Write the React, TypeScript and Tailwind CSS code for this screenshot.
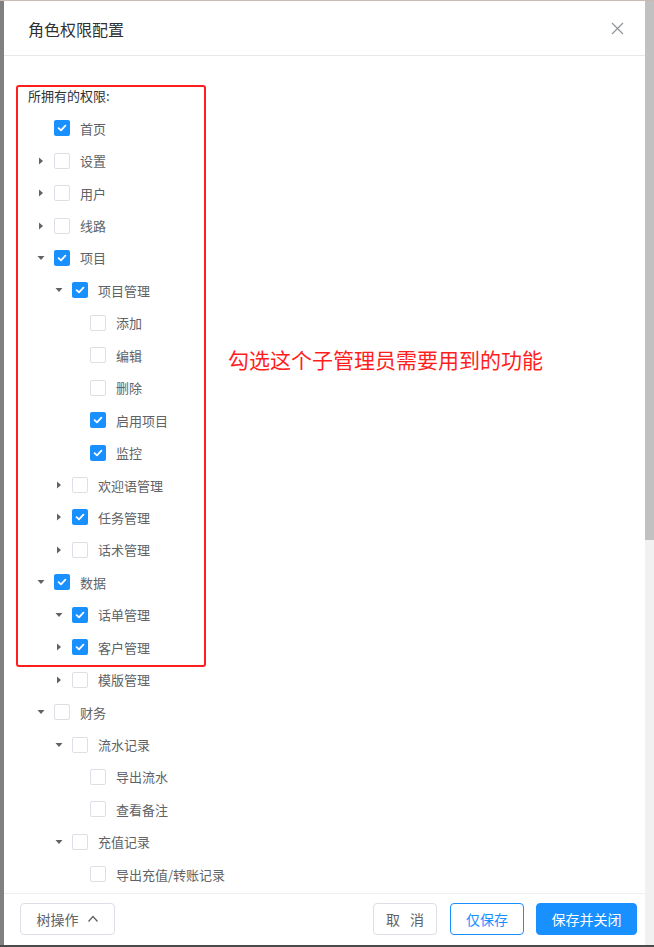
import React from "react";

type Node = { level: number; caret: "none" | "right" | "down"; checked: boolean; label: string };

const rows: Node[] = [
  { level: 0, caret: "none", checked: true, label: "首页" },
  { level: 0, caret: "right", checked: false, label: "设置" },
  { level: 0, caret: "right", checked: false, label: "用户" },
  { level: 0, caret: "right", checked: false, label: "线路" },
  { level: 0, caret: "down", checked: true, label: "项目" },
  { level: 1, caret: "down", checked: true, label: "项目管理" },
  { level: 2, caret: "none", checked: false, label: "添加" },
  { level: 2, caret: "none", checked: false, label: "编辑" },
  { level: 2, caret: "none", checked: false, label: "删除" },
  { level: 2, caret: "none", checked: true, label: "启用项目" },
  { level: 2, caret: "none", checked: true, label: "监控" },
  { level: 1, caret: "right", checked: false, label: "欢迎语管理" },
  { level: 1, caret: "right", checked: true, label: "任务管理" },
  { level: 1, caret: "right", checked: false, label: "话术管理" },
  { level: 0, caret: "down", checked: true, label: "数据" },
  { level: 1, caret: "down", checked: true, label: "话单管理" },
  { level: 1, caret: "right", checked: true, label: "客户管理" },
  { level: 1, caret: "right", checked: false, label: "模版管理" },
  { level: 0, caret: "down", checked: false, label: "财务" },
  { level: 1, caret: "down", checked: false, label: "流水记录" },
  { level: 2, caret: "none", checked: false, label: "导出流水" },
  { level: 2, caret: "none", checked: false, label: "查看备注" },
  { level: 1, caret: "down", checked: false, label: "充值记录" },
  { level: 2, caret: "none", checked: false, label: "导出充值/转账记录" },
];

function Caret({ kind }: { kind: Node["caret"] }) {
  if (kind === "none") return <span className="w-[18px] shrink-0" />;
  return (
    <span className="w-[18px] shrink-0 flex items-center justify-center">
      <svg width="10" height="10" viewBox="0 0 10 10">
        {kind === "right" ? (
          <polygon points="3,1.5 7,5 3,8.5" fill="#606266" />
        ) : (
          <polygon points="1.5,3 8.5,3 5,7" fill="#606266" />
        )}
      </svg>
    </span>
  );
}

function Checkbox({ checked }: { checked: boolean }) {
  return checked ? (
    <span className="w-4 h-4 shrink-0 rounded-[2px] bg-[#1890ff] flex items-center justify-center">
      <svg width="12" height="12" viewBox="0 0 12 12">
        <path d="M2.6 6.2 L5 8.4 L9.4 3.6" fill="none" stroke="#fff" strokeWidth="1.8" strokeLinecap="round" strokeLinejoin="round" />
      </svg>
    </span>
  ) : (
    <span className="w-4 h-4 shrink-0 rounded-[2px] border border-[#dcdfe6] bg-white" />
  );
}

function Row({ n }: { n: Node }) {
  const pad = n.level === 0 ? "pl-[28px]" : n.level === 1 ? "pl-[46px]" : "pl-[64px]";
  return (
    <div className={`h-[32.45px] flex items-center ${pad}`}>
      <Caret kind={n.caret} />
      <span className="w-[4px] shrink-0" />
      <Checkbox checked={n.checked} />
      <span className="ml-[10px] text-[13px] text-[#606266] whitespace-nowrap leading-none">{n.label}</span>
    </div>
  );
}

export default function App() {
  return (
    <div
      className="w-[654px] h-[947px] flex flex-col bg-white overflow-hidden relative"
      style={{ fontFamily: '"Noto Sans CJK SC", "Noto Sans", sans-serif' }}
    >
      <div className="h-px bg-[#c9bab6] shrink-0" />
      <div className="flex-1 flex min-h-0">
        <div className="w-[4px] bg-[#808080] shrink-0" />
        <div className="flex-1 flex flex-col min-w-0 relative">
          {/* header */}
          <div className="h-[55px] shrink-0 border-b border-[#e8e8e8] flex items-center justify-between pl-[24px] pr-[21px]">
            <span className="text-[16px] text-[#303133] leading-none mt-[1px]">角色权限配置</span>
            <svg width="13" height="13" viewBox="0 0 13 13">
              <path d="M1 1 L12 12 M12 1 L1 12" stroke="#909399" strokeWidth="1.2" />
            </svg>
          </div>
          {/* body */}
          <div className="flex-1 min-h-0 overflow-hidden pt-[30px] relative">
            <div className="pl-[24px] h-[20px] flex items-center text-[13px] text-[#303133]">所拥有的权限:</div>
            <div className="mt-[6px]">
              {rows.map((n, i) => (
                <Row key={i} n={n} />
              ))}
            </div>
            <div className="absolute left-[12px] top-[29px] w-[190px] h-[582px] border-[2.5px] border-[#ff1e1e] rounded-[3px]" />
            <div className="absolute left-[224px] top-[293px] text-[21px] text-[#ff1e1e] leading-none whitespace-nowrap">
              勾选这个子管理员需要用到的功能
            </div>
          </div>
          {/* footer */}
          <div className="h-[52px] shrink-0 border-t border-[#eeeeee] flex items-center justify-between pl-[16px] pr-[8px] pb-[1px]">
            <button className="h-[32px] w-[95px] border border-[#dcdfe6] rounded-[4px] flex items-center justify-center gap-[8px] text-[14px] text-[#606266] bg-white">
              <span>树操作</span>
              <svg width="12" height="12" viewBox="0 0 12 12">
                <path d="M1.5 8.5 L6 3.5 L10.5 8.5" fill="none" stroke="#606266" strokeWidth="1.3" />
              </svg>
            </button>
            <div className="flex items-center">
              <button className="h-[32px] w-[64px] border border-[#dcdfe6] rounded-[4px] text-[14px] text-[#606266] bg-white flex items-center justify-center gap-[10px]">
                <span>取</span>
                <span>消</span>
              </button>
              <button className="ml-[13px] h-[32px] w-[74px] border border-[#1890ff] rounded-[4px] text-[14px] text-[#1890ff] bg-white">
                仅保存
              </button>
              <button className="ml-[12px] h-[32px] w-[101px] border border-[#1890ff] rounded-[4px] text-[14px] text-white bg-[#1890ff]">
                保存并关闭
              </button>
            </div>
          </div>
        </div>
        <div className="w-[9px] shrink-0 bg-[#f1f1f1] flex flex-col">
          <div className="h-[539px] bg-[#c1c1c1]" />
        </div>
      </div>
      <div className="h-[2px] bg-[#4a4a4a] shrink-0" />
    </div>
  );
}
